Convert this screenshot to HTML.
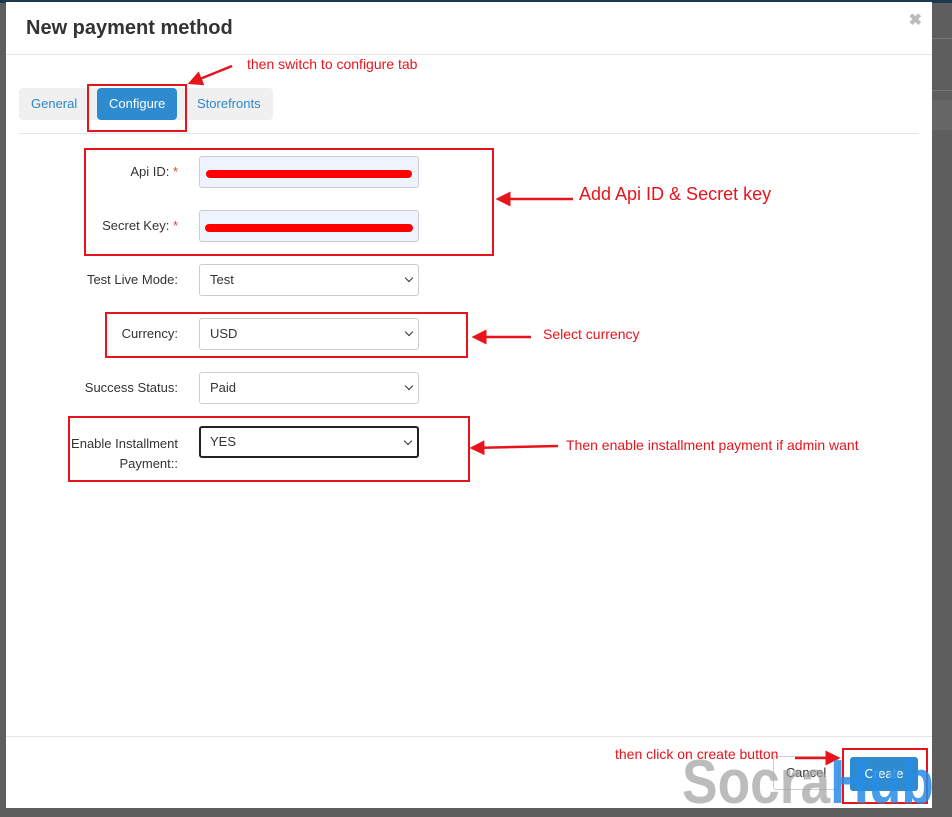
<!DOCTYPE html>
<html><head><style>
html,body{margin:0;}
body{width:952px;height:813px;background:#5e5e5e;position:relative;overflow:hidden;font-family:"Liberation Sans",sans-serif;}
.topbar{position:absolute;left:0;top:0;width:952px;height:3px;background:#1c3a4f}
.modal{position:absolute;left:6px;top:2px;width:926px;height:806px;background:#fff;}
.abs{position:absolute}
h1{position:absolute;left:20px;top:15px;margin:0;font-size:20px;font-weight:bold;color:#333}
.hr{position:absolute;height:1px;background:#e5e5e5}
.tabs{left:13px;top:86px;width:254px;height:32px;background:#f0f0f0;border-radius:4px}
.tab{position:absolute;top:86px;height:32px;line-height:32px;font-size:13px;color:#2e86c7}
.lbl{position:absolute;font-size:13px;color:#333;text-align:right;width:172px}
.star{color:#e53935}
.inp{position:absolute;left:193px;width:218px;height:30px;border:1px solid #ccc;border-radius:3px;background:#eef3fd}
.sel{position:absolute;left:193px;width:220px;height:32px;border:1px solid #ccc;border-radius:3px;background:#fff;font-size:13px;color:#333;line-height:30px;box-sizing:border-box;padding-left:10px}
.sel:after{content:"";position:absolute;right:6px;top:10px;width:5px;height:5px;border-right:1.5px solid #333;border-bottom:1.5px solid #333;transform:rotate(45deg)}
.box{position:absolute;border:2px solid #e8141b}
.red{position:absolute;color:#e8141b;font-size:14px}
.strike{position:absolute;height:8px;background:#f00;border-radius:4px}
</style></head><body>
<div class="topbar"></div>
<div class="abs" style="left:932px;top:38px;width:20px;height:1px;background:#777"></div>
<div class="abs" style="left:932px;top:90px;width:20px;height:1px;background:#777"></div>
<div class="abs" style="left:932px;top:100px;width:20px;height:30px;background:#666"></div>
<div class="modal">
<h1>New payment method</h1>
<div class="abs" style="right:10px;top:8px;color:#bbb;font-size:16px;font-weight:bold">✖</div>
<div class="hr" style="left:0;top:52px;width:926px"></div>
<div class="abs tabs"></div>
<div class="tab" style="left:25px">General</div>
<div class="abs" style="left:91px;top:86px;width:80px;height:32px;background:#2f8bd0;border-radius:4px"></div>
<div class="tab" style="left:103px;color:#fff">Configure</div>
<div class="tab" style="left:191px">Storefronts</div>
<div class="hr" style="left:13px;top:131px;width:900px"></div>

<div class="lbl" style="top:162px">Api ID: <span class="star">*</span></div>
<div class="inp" style="top:154px"></div>
<div class="strike" style="left:200px;top:168px;width:206px"></div>
<div class="lbl" style="top:216px">Secret Key: <span class="star">*</span></div>
<div class="inp" style="top:208px"></div>
<div class="strike" style="left:199px;top:222px;width:208px"></div>
<div class="lbl" style="top:270px">Test Live Mode:</div>
<div class="sel" style="top:262px">Test</div>
<div class="lbl" style="top:324px">Currency:</div>
<div class="sel" style="top:316px">USD</div>
<div class="lbl" style="top:378px">Success Status:</div>
<div class="sel" style="top:370px">Paid</div>
<div class="lbl" style="top:432px;line-height:20px">Enable Installment<br>Payment::</div>
<div class="sel" style="top:424px;border:2px solid #222;padding-left:9px;line-height:28px">YES</div>

<div class="hr" style="left:0;top:734px;width:926px"></div>
<div class="abs" style="left:767px;top:754px;width:64px;height:32px;border:1px solid #ccc;border-radius:3px;font-size:13px;color:#333;line-height:32px;text-align:center">Cancel</div>
<div class="abs" style="left:844px;top:755px;width:68px;height:34px;background:#2f8bd0;border-radius:3px;font-size:13px;color:#fff;line-height:34px;text-align:center">Create</div>

<div class="box" style="left:81px;top:82px;width:96px;height:44px"></div>
<div class="box" style="left:78px;top:146px;width:406px;height:104px"></div>
<div class="box" style="left:99px;top:310px;width:359px;height:42px"></div>
<div class="box" style="left:62px;top:414px;width:398px;height:62px"></div>
<div class="box" style="left:836px;top:746px;width:82px;height:52px"></div>
<div class="red" style="left:241px;top:54px">then switch to configure tab</div>
<div class="red" style="left:573px;top:182px;font-size:18px">Add Api ID &amp; Secret key</div>
<div class="red" style="left:537px;top:324px">Select currency</div>
<div class="red" style="left:560px;top:435px">Then enable installment payment if admin want</div>
<div class="red" style="left:609px;top:744px">then click on create button</div>
<svg class="abs" style="left:0;top:0" width="926" height="806">
<defs><marker id="a" markerWidth="6" markerHeight="6" refX="5" refY="3" orient="auto"><path d="M0,0 L6,3 L0,6 z" fill="#e8141b"/></marker></defs>
<g stroke="#e8141b" stroke-width="2.5" fill="none" marker-end="url(#a)">
<line x1="226" y1="64" x2="184" y2="81"/>
<line x1="567" y1="197" x2="492" y2="197"/>
<line x1="525" y1="335" x2="468" y2="335"/>
<line x1="552" y1="444" x2="466" y2="446"/>
<line x1="789" y1="756" x2="832" y2="756"/>
</g></svg>
</div>
<div class="abs" style="left:682px;top:752px;font-size:62px;font-weight:bold;line-height:62px;color:rgba(160,160,160,0.7);transform:scaleX(0.86);transform-origin:left top;white-space:nowrap">Socra<span style="color:rgba(40,140,230,0.85)">Hub</span></div>
</body></html>
